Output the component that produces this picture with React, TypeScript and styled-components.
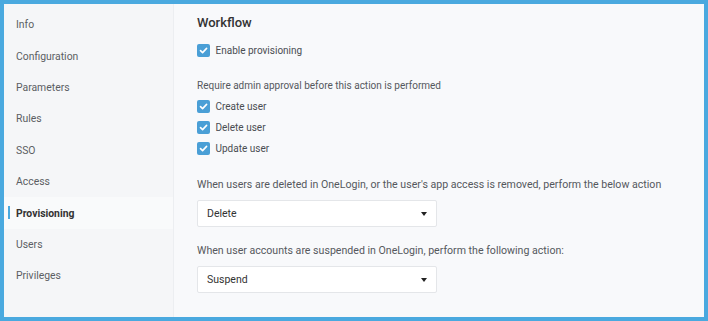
import styled, { createGlobalStyle } from 'styled-components';

const GlobalStyle = createGlobalStyle`
  html, body {
    margin: 0;
    padding: 0;
    font-family: Roboto, "Liberation Sans", Arial, sans-serif;
  }
`;

const Frame = styled.div`
  box-sizing: border-box;
  width: 708px;
  height: 321px;
  border: 4px solid #4aa9df;
  display: flex;
  background: #f8f9fb;
  overflow: hidden;
`;

const Sidebar = styled.nav`
  width: 169px;
  flex-shrink: 0;
  background: #f5f6f8;
  border-right: 1px solid #eceef1;
  padding-top: 5px;
`;

const NavItem = styled.div<{ active?: boolean }>`
  position: relative;
  height: 31.4px;
  display: flex;
  align-items: center;
  padding-left: 12px;
  font-size: 10.4px;
  color: ${(p) => (p.active ? '#333' : '#5b5e63')};
  font-weight: ${(p) => (p.active ? 700 : 400)};
  background: ${(p) => (p.active ? '#f9fafb' : 'transparent')};

  &::before {
    content: '';
    display: ${(p) => (p.active ? 'block' : 'none')};
    position: absolute;
    left: 4px;
    top: 9px;
    width: 2px;
    height: 13px;
    background: #4aa9df;
  }
`;

const Content = styled.main`
  flex: 1;
  padding: 11px 0 0 23px;
  color: #4a4d52;
`;

const Title = styled.h2`
  margin: 0;
  font-size: 13px;
  font-weight: 500;
  color: #333;
  line-height: 16px;
`;

const CheckRow = styled.label`
  display: flex;
  align-items: center;
  gap: 5.5px;
  height: 21px;
  font-size: 10px;
  color: #4a4d52;
`;

const Box = styled.span`
  width: 13px;
  height: 13px;
  border-radius: 2px;
  background: #4a9fd6;
  display: inline-flex;
  align-items: center;
  justify-content: center;
`;

const Group = styled.div<{ top: number }>`
  margin-top: ${(p) => p.top}px;
`;

const CheckList = styled.div`
  margin-top: 3px;
`;

const Label = styled.div<{ size: number }>`
  font-size: ${(p) => p.size}px;
  line-height: 14px;
  color: #55585d;
`;

const Select = styled.div`
  box-sizing: border-box;
  width: 240px;
  height: 27px;
  margin-top: 8px;
  background: #fff;
  border: 1px solid #e4e6e9;
  border-radius: 2px;
  display: flex;
  align-items: center;
  justify-content: space-between;
  padding: 0 9px 0 9px;
  font-size: 10.5px;
  color: #333;
`;

const Caret = styled.span`
  width: 0;
  height: 0;
  border-left: 3.5px solid transparent;
  border-right: 3.5px solid transparent;
  border-top: 4px solid #222;
`;

function Check({ label }: { label: string }) {
  return (
    <CheckRow>
      <Box>
        <svg width="9" height="9" viewBox="0 0 9 9">
          <path d="M1.5 4.6 L3.6 6.6 L7.6 2.4" stroke="#fff" strokeWidth="1.6" fill="none" strokeLinecap="round" strokeLinejoin="round" />
        </svg>
      </Box>
      {label}
    </CheckRow>
  );
}

const navItems = ['Info', 'Configuration', 'Parameters', 'Rules', 'SSO', 'Access', 'Provisioning', 'Users', 'Privileges'];

export default function App() {
  return (
    <>
      <GlobalStyle />
      <Frame>
        <Sidebar>
          {navItems.map((n) => (
            <NavItem key={n} active={n === 'Provisioning'}>
              {n}
            </NavItem>
          ))}
        </Sidebar>
        <Content>
          <Title>Workflow</Title>
          <Group top={9}>
            <Check label="Enable provisioning" />
          </Group>
          <Group top={18}>
            <Label size={10}>Require admin approval before this action is performed</Label>
            <CheckList>
              <Check label="Create user" />
              <Check label="Delete user" />
              <Check label="Update user" />
            </CheckList>
          </Group>
          <Group top={19}>
            <Label size={10.6}>When users are deleted in OneLogin, or the user's app access is removed, perform the below action</Label>
            <Select>
              Delete
              <Caret />
            </Select>
          </Group>
          <Group top={17}>
            <Label size={10.6}>When user accounts are suspended in OneLogin, perform the following action:</Label>
            <Select>
              Suspend
              <Caret />
            </Select>
          </Group>
        </Content>
      </Frame>
    </>
  );
}
